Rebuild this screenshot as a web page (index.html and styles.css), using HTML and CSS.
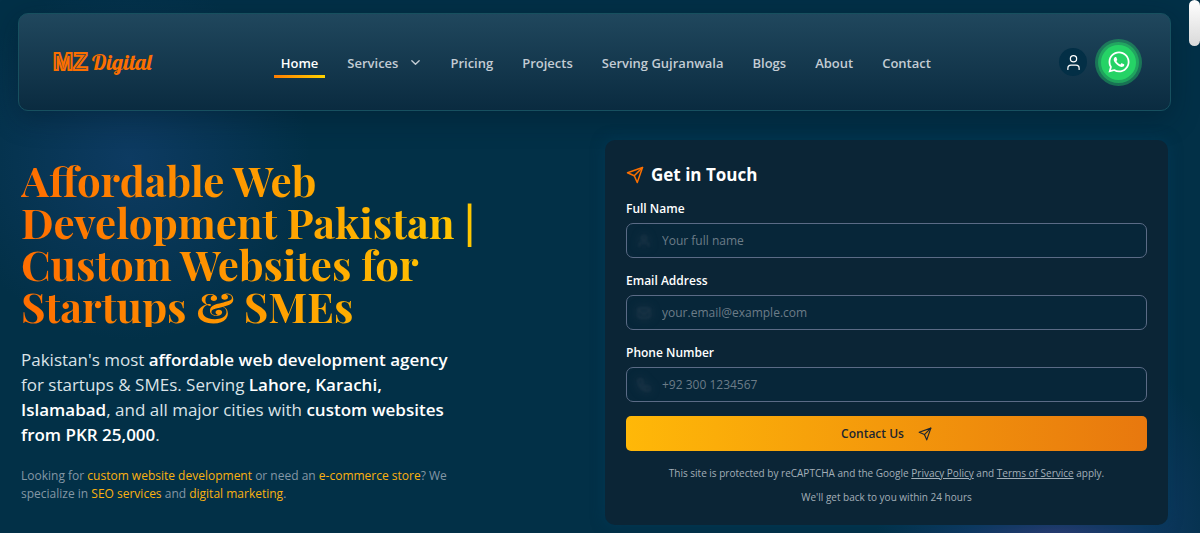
FILE: index.html
```html
<!DOCTYPE html>
<html lang="en">
<head>
    <meta charset="UTF-8">
    <meta name="viewport" content="width=device-width, initial-scale=1.0">
    <title>MZ Digital</title>
    <link rel="stylesheet" href="styles.css">
</head>
<body>
    <header class="navbar">
        <a href="#" class="logo"><span class="logo-mark">MZ</span><span class="logo-name">Digital</span></a>
        <nav class="menu">
            <a href="#" class="active">Home</a>
            <a href="#">Services
                <svg class="chevron" viewBox="0 0 24 24"><path d="m4 8 8 8 8-8"/></svg>
            </a>
            <a href="#">Pricing</a>
            <a href="#">Projects</a>
            <a href="#">Serving Gujranwala</a>
            <a href="#">Blogs</a>
            <a href="#">About</a>
            <a href="#">Contact</a>
        </nav>
        <div class="actions">
            <a href="#" class="user-link" aria-label="Account">
                <svg viewBox="0 0 24 24"><circle cx="12" cy="6" r="5"/><path d="M3 23v-2a5 5 0 0 1 5-5h8a5 5 0 0 1 5 5v2"/></svg>
            </a>
            <a href="#" class="whatsapp" aria-label="WhatsApp">
                <svg viewBox="0 0 448 512"><path d="M380.9 97.1C339 55.1 283.2 32 223.9 32c-122.4 0-222 99.6-222 222 0 39.1 10.2 77.3 29.6 111L0 480l117.7-30.9c32.4 17.7 68.9 27 106.1 27h.1c122.3 0 224.1-99.6 224.1-222 0-59.3-25.2-115-67.1-157zm-157 341.6c-33.2 0-65.7-8.9-94-25.7l-6.7-4-69.8 18.3L72 359.2l-4.4-7c-18.5-29.4-28.2-63.3-28.2-98.2 0-101.7 82.8-184.5 184.6-184.5 49.3 0 95.6 19.2 130.4 54.1 34.8 34.9 56.2 81.2 56.1 130.5 0 101.8-84.9 184.6-186.6 184.6zm101.2-138.2c-5.5-2.8-32.8-16.2-37.9-18-5.1-1.9-8.8-2.8-12.5 2.8-3.7 5.6-14.3 18-17.6 21.8-3.2 3.7-6.5 4.2-12 1.4-32.6-16.3-54-29.1-75.5-66-5.7-9.8 5.7-9.1 16.3-30.3 1.8-3.7.9-6.9-.5-9.7-1.4-2.8-12.5-30.1-17.1-41.2-4.5-10.8-9.1-9.3-12.5-9.5-3.2-.2-6.9-.2-10.6-.2-3.7 0-9.7 1.4-14.8 6.9-5.1 5.6-19.4 19-19.4 46.3 0 27.3 19.9 53.7 22.6 57.4 2.8 3.7 39.1 59.7 94.8 83.8 35.2 15.2 49 16.5 66.6 13.9 10.7-1.6 32.8-13.4 37.4-26.4 4.6-13 4.6-24.1 3.2-26.4-1.3-2.5-5-3.9-10.5-6.6z"/></svg>
            </a>
        </div>
    </header>

    <main class="hero">
        <section class="intro">
            <h1>Affordable Web<br>Development Pakistan |<br>Custom Websites for<br>Startups &amp; SMEs</h1>
            <p class="lead">Pakistan's most <strong>affordable web development agency</strong><br>for startups &amp; SMEs. Serving <strong>Lahore, Karachi,<br>Islamabad</strong>, and all major cities with <strong>custom websites<br>from PKR 25,000</strong>.</p>
            <p class="links">Looking for <a href="#">custom website development</a> or need an <a href="#">e-commerce store</a>? We<br>specialize in <a href="#">SEO services</a> and <a href="#">digital marketing</a>.</p>
        </section>

        <form class="contact-form">
            <h2>
                <svg viewBox="0 0 24 24"><path d="M22 2 15 22l-4-9-9-4Z"/><path d="M22 2 11 13"/></svg>
                Get in Touch
            </h2>
            <div class="form-group">
                <label for="name">Full Name</label>
                <div class="field">
                    <svg viewBox="0 0 24 24"><circle cx="12" cy="7" r="4"/><path d="M4 21v-2a4 4 0 0 1 4-4h8a4 4 0 0 1 4 4v2"/></svg>
                    <input type="text" id="name" placeholder="Your full name">
                </div>
            </div>
            <div class="form-group">
                <label for="email">Email Address</label>
                <div class="field">
                    <svg viewBox="0 0 24 24"><rect x="2" y="4" width="20" height="16" rx="2"/><path d="m2 7 10 7 10-7"/></svg>
                    <input type="email" id="email" placeholder="your.email@example.com">
                </div>
            </div>
            <div class="form-group">
                <label for="phone">Phone Number</label>
                <div class="field">
                    <svg viewBox="0 0 24 24"><path d="M22 17v3a2 2 0 0 1-2 2A18 18 0 0 1 2 4a2 2 0 0 1 2-2h3a2 2 0 0 1 2 2l1 4-2 2a16 16 0 0 0 6 6l2-2 4 1a2 2 0 0 1 2 2z"/></svg>
                    <input type="tel" id="phone" placeholder="+92 300 1234567">
                </div>
            </div>
            <button type="submit">
                Contact Us
                <svg viewBox="0 0 24 24"><path d="M22 2 15 22l-4-9-9-4Z"/><path d="M22 2 11 13"/></svg>
            </button>
            <p class="note">This site is protected by reCAPTCHA and the Google <a href="#">Privacy Policy</a> and <a href="#">Terms of Service</a> apply.</p>
            <p class="note">We'll get back to you within 24 hours</p>
        </form>
    </main>

    <div class="scroll-thumb"></div>
</body>
</html>
```
FILE: styles.css
```css
* {
    box-sizing: border-box;
}
body {
    margin: 0;
    padding: 13px 29px 8px 18px;
    min-height: 100vh;
    font-family: "Open Sans", "Noto Sans", sans-serif;
    color: #ffffff;
    background:
        radial-gradient(circle at 130px 160px, #0d3b62 0, rgba(13, 59, 98, 0) 180px),
        radial-gradient(ellipse 180px 220px at 88% 103%, #2b3a72 0, rgba(18, 58, 104, 0.8) 50%, rgba(13, 59, 98, 0) 100%),
        #023047;
}
svg {
    fill: none;
    stroke: currentColor;
    stroke-width: 2;
    stroke-linecap: round;
    stroke-linejoin: round;
    flex: none;
}
.navbar {
    display: flex;
    justify-content: space-between;
    align-items: center;
    height: 98px;
    padding: 0 34px;
    border: 1px solid #17505f;
    border-radius: 10px;
    background: linear-gradient(#20475d, #0a2b40);
    box-shadow: 0 7px 28px rgba(0, 20, 35, 0.35);
}
.logo {
    display: flex;
    align-items: center;
    gap: 3px;
    color: #fb6f00;
    text-decoration: none;
}
.logo-mark {
    font: bold 24px/28px "Liberation Sans", sans-serif;
    color: #1a3d54;
    -webkit-text-stroke: 2px #fb6f00;
}
.logo-name {
    font: 22px/28px "Lobster Two", Lobster, "Liberation Serif", serif;
    font-style: italic;
    font-weight: bold;
}
.menu {
    display: flex;
    gap: 15px;
}
.menu a {
    display: flex;
    align-items: center;
    gap: 12px;
    padding: 5px 7px 1px;
    font-size: 13px;
    font-weight: 600;
    line-height: 22px;
    color: #c3ccd4;
    text-decoration: none;
    border-bottom: 3px solid transparent;
}
.menu .active {
    color: #ffffff;
    border-image: linear-gradient(90deg, #ff7b00, #ffd500) 1;
    border-width: 0 0 3px;
    border-style: solid;
}
.chevron {
    width: 11px;
    height: 11px;
    stroke-width: 3;
}
.actions {
    display: flex;
    align-items: center;
    gap: 14px;
}
.user-link,
.whatsapp {
    display: flex;
    align-items: center;
    justify-content: center;
    border-radius: 50%;
    color: #ffffff;
}
.user-link {
    width: 28px;
    height: 28px;
    background: #032f46;
}
.user-link svg {
    width: 15px;
    height: 15px;
}
.whatsapp {
    width: 35px;
    height: 35px;
    background: #25d366;
    box-shadow: 0 0 0 3px rgba(37, 211, 102, 0.5), 0 0 0 6px rgba(37, 211, 102, 0.4);
}
.whatsapp svg {
    width: 24px;
    height: 24px;
    fill: currentColor;
    stroke: none;
}
.hero {
    display: grid;
    grid-template-columns: 1fr 1fr;
    gap: 21px;
    align-items: center;
    padding: 29px 3px 0;
}
.intro {
    padding-bottom: 4px;
}
.intro h1 {
    width: fit-content;
    margin: 0 0 20px;
    font: bold 42px/42px "Playfair Display", "Liberation Serif", serif;
    color: transparent;
    background: linear-gradient(90deg, #ff6d00, #ffc800);
    background-clip: text;
    -webkit-background-clip: text;
}
.lead {
    margin: 0 0 20px;
    font-size: 17px;
    line-height: 25px;
    color: #dbe3e8;
}
.lead strong {
    font-weight: 600;
    color: #ffffff;
}
.links {
    margin: 0;
    font-size: 12px;
    line-height: 18px;
    color: #8497a5;
}
.links a {
    color: #fbb010;
    text-decoration: none;
}
.contact-form {
    padding: 21px 21px 20px;
    border-radius: 10px;
    background: #0b2536;
    box-shadow: 0 0 14px rgba(3, 60, 92, 0.6);
}
.contact-form h2 {
    display: flex;
    align-items: center;
    gap: 7px;
    margin: 0 0 11px;
    font-size: 17px;
    line-height: 28px;
}
.contact-form h2 svg {
    width: 18px;
    height: 18px;
    color: #fb6f00;
}
.form-group {
    margin-bottom: 14px;
}
.form-group label {
    display: block;
    margin-bottom: 5px;
    font-size: 12px;
    font-weight: 600;
    line-height: 18px;
}
.field {
    display: flex;
    align-items: center;
    gap: 11px;
    height: 35px;
    padding: 0 10px;
    border: 1px solid #5b6b86;
    border-radius: 7px;
    background: #072639;
}
.field svg {
    width: 14px;
    height: 14px;
    color: #1d3547;
    filter: blur(1px) drop-shadow(0 0 4px #2a4254);
}
.field input {
    flex: 1;
    min-width: 0;
    padding: 0;
    border: 0;
    outline: 0;
    font: 12px/18px "Open Sans", "Noto Sans", sans-serif;
    color: #ffffff;
    background: none;
}
.field input::placeholder {
    color: #6c7c88;
}
.contact-form button {
    display: flex;
    align-items: center;
    justify-content: center;
    gap: 14px;
    width: 100%;
    height: 35px;
    margin-bottom: 14px;
    border: 0;
    border-radius: 5px;
    font: 600 12px/18px "Open Sans", "Noto Sans", sans-serif;
    color: #1c2530;
    background: linear-gradient(90deg, #ffb808, #e8780e);
    cursor: pointer;
}
.contact-form button svg {
    width: 14px;
    height: 14px;
}
.note {
    margin: 0 0 8px;
    font-size: 10px;
    line-height: 16px;
    text-align: center;
    color: #a3afb8;
}
.note:last-child {
    margin-bottom: 0;
}
.note a {
    color: inherit;
}
.scroll-thumb {
    position: fixed;
    top: 0;
    right: 0;
    width: 11px;
    height: 46px;
    border-radius: 6px;
    background: linear-gradient(#ffffff, #d9d9d9);
}
```
